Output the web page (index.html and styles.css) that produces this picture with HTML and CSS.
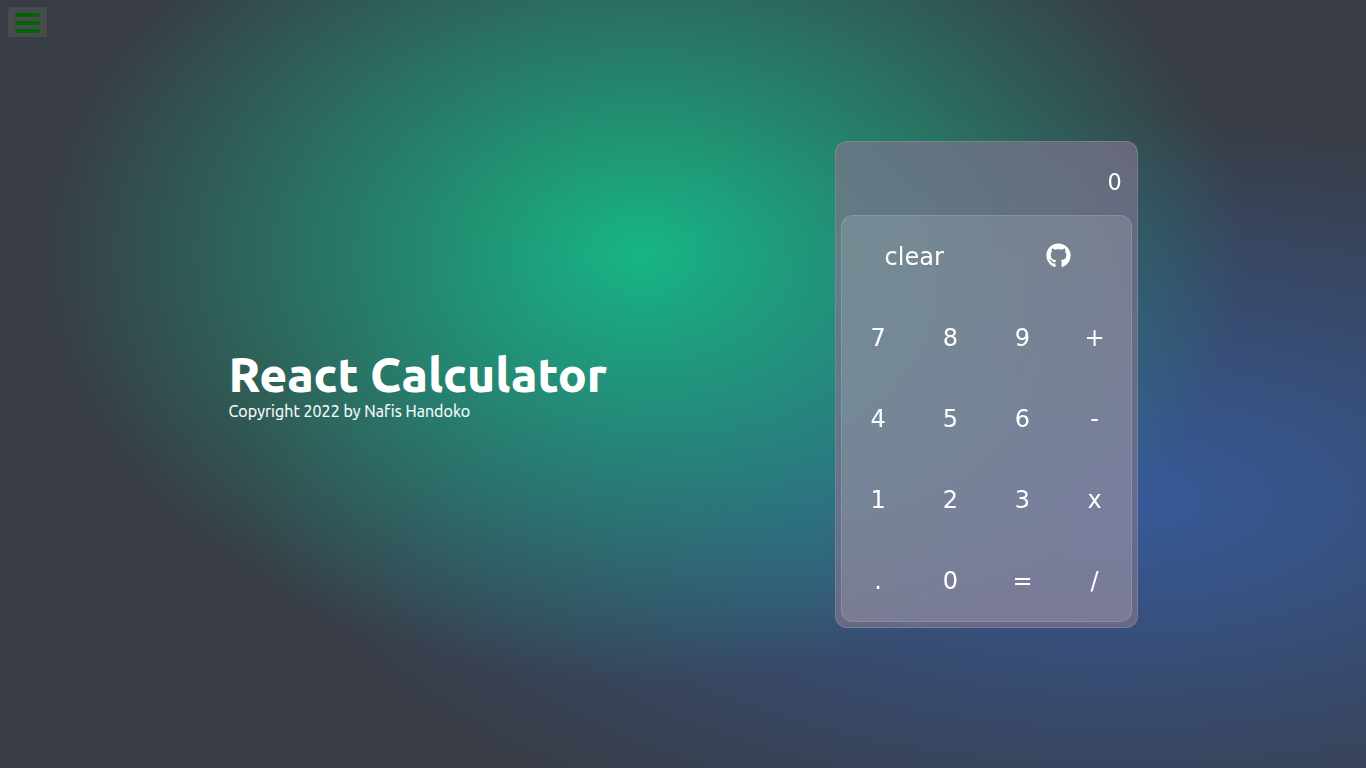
FILE: index.html
```html
<!DOCTYPE html>
<html lang="en">
<head>
<meta charset="utf-8">
<title>React Calculator</title>
<link rel="stylesheet" href="styles.css">
</head>
<body>
<button class="menu" aria-label="Menu"><span class="bar"></span><span class="bar"></span><span class="bar"></span></button>
<main class="page">
  <section class="intro">
    <h1 class="title">React Calculator</h1>
    <p class="copyright">Copyright 2022 by Nafis Handoko</p>
  </section>
  <section class="calculator">
    <div class="display">0</div>
    <div class="keypad">
      <div class="key wide">clear</div>
      <div class="key wide"><svg class="github" viewBox="0 0 496 512" fill="currentColor"><path d="M165.900 397.400c0 2-2.300 3.600-5.200 3.600-3.300.3-5.600-1.300-5.600-3.600 0-2 2.300-3.600 5.200-3.600 3-.3 5.600 1.300 5.600 3.600zm-31.100-4.500c-.7 2 1.300 4.300 4.300 4.900 2.600 1 5.600 0 6.200-2s-1.300-4.300-4.300-5.200c-2.600-.7-5.500.3-6.200 2.300zm44.200-1.700c-2.900.7-4.900 2.600-4.600 4.900.3 2 2.900 3.300 5.900 2.600 2.900-.7 4.900-2.600 4.600-4.600-.3-1.900-3-3.200-5.900-2.900zM244.800 8C106.100 8 0 113.300 0 252c0 110.900 69.800 205.800 169.500 239.200 12.800 2.300 17.300-5.600 17.300-12.100 0-6.200-.3-40.400-.3-61.400 0 0-70 15-84.700-29.800 0 0-11.400-29.100-27.800-36.600 0 0-22.900-15.700 1.600-15.400 0 0 24.900 2 38.600 25.800 21.900 38.600 58.600 27.500 72.900 20.900 2.300-16 8.800-27.100 16-33.700-55.900-6.200-112.300-14.300-112.300-110.500 0-27.500 7.600-41.300 23.600-58.900-2.600-6.500-11.100-33.300 2.600-67.900 20.900-6.500 69 27 69 27 20-5.600 41.500-8.500 62.800-8.500s42.800 2.900 62.800 8.500c0 0 48.100-33.600 69-27 13.700 34.700 5.200 61.400 2.600 67.900 16 17.700 25.800 31.500 25.800 58.900 0 96.500-58.900 104.200-114.800 110.500 9.200 7.900 17 22.900 17 46.400 0 33.700-.3 75.400-.3 83.600 0 6.500 4.600 14.400 17.300 12.100C428.200 457.800 496 362.900 496 252 496 113.300 383.500 8 244.800 8z"/></svg></div>
      <div class="key">7</div><div class="key">8</div><div class="key">9</div><div class="key">+</div>
      <div class="key">4</div><div class="key">5</div><div class="key">6</div><div class="key">-</div>
      <div class="key">1</div><div class="key">2</div><div class="key">3</div><div class="key">x</div>
      <div class="key">.</div><div class="key">0</div><div class="key">=</div><div class="key">/</div>
    </div>
  </section>
</main>
</body>
</html>
```
FILE: styles.css
```css
* { box-sizing: border-box; }
body {
  margin: 0;
  height: 100vh;
  overflow: hidden;
  color: #fff;
  font-family: Ubuntu, "Noto Sans", sans-serif;
  background-color: #383c44;
  background-image:
    radial-gradient(at 47% 33%, hsl(162, 77%, 40%) 0, transparent 59%),
    radial-gradient(at 82% 65%, #375a9a 0, transparent 55%);
}
.menu {
  position: absolute;
  top: 7px;
  left: 8px;
  width: 39px;
  height: 30px;
  padding: 6px 7px 4px;
  border: 0;
  background: #484b4d;
  display: flex;
  flex-direction: column;
  gap: 4px;
}
.bar { width: 25px; height: 4px; border-radius: 2px; background: #006400; }
.page {
  height: 100vh;
  display: grid;
  grid-template-columns: 606.5px 302.75px;
  padding-left: 228.5px;
  align-items: center;
}
.title {
  margin: 0;
  font-size: 48px;
  line-height: 52px;
  padding-bottom: 2px;
  font-weight: 800;
  letter-spacing: -0.1px;
  white-space: nowrap;
}
.copyright {
  margin: 0;
  font-size: 16px;
  line-height: 18px;
  letter-spacing: 0.05px;
  white-space: nowrap;
  -webkit-text-stroke: 0.15px #fff;
}
.calculator {
  height: 487px;
  margin-top: 1px;
  padding: 0 5px 5px;
  display: flex;
  flex-direction: column;
  border: 1px solid rgba(255, 255, 255, 0.125);
  border-radius: 12px;
  background-color: rgba(124, 116, 140, 0.7);
  backdrop-filter: blur(4px);
  font-family: "DejaVu Sans", sans-serif;
}
.display {
  flex: 1;
  display: flex;
  align-items: center;
  justify-content: flex-end;
  padding: 7px 10px 0 0;
  font-size: 22.4px;
}
.keypad {
  height: 407px;
  display: grid;
  grid-template-columns: repeat(4, 1fr);
  grid-template-rows: repeat(5, 1fr);
  border: 1px solid rgba(255, 255, 255, 0.125);
  border-radius: 12px;
  background-color: rgba(255, 255, 255, 0.12);
  font-size: 24px;
}
.key { display: flex; align-items: center; justify-content: center; }
.wide { grid-column: span 2; }
.github { width: 25px; height: 25px; margin-bottom: 2px; }
```
